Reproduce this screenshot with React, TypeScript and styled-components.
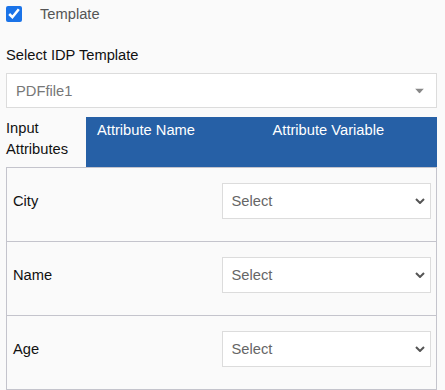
import styled, { createGlobalStyle } from 'styled-components';

const GlobalStyle = createGlobalStyle`
  html, body {
    margin: 0;
    padding: 0;
    background: #fafafa;
    font-family: "Liberation Sans", Arial, sans-serif;
    font-size: 14.7px;
  }
`;

const Page = styled.div`
  padding: 6px 8px 0 6px;
  color: #111;
`;

const CheckRow = styled.label`
  display: flex;
  align-items: center;
  height: 16px;
  gap: 18px;
  color: #555;
`;

const Checkbox = styled.input`
  width: 16px;
  height: 16px;
  margin: 0;
  accent-color: #1a73e8;
`;

const FieldLabel = styled.div`
  margin-top: 24px;
  line-height: 18px;
`;

const SelectWrap = styled.div<{ $height: number }>`
  position: relative;
  height: ${({ $height }) => $height}px;
`;

const NativeSelect = styled.select<{ $muted?: boolean }>`
  appearance: none;
  width: 100%;
  height: 100%;
  box-sizing: border-box;
  border: 1px solid #dcdcdc;
  background: #fff;
  font-family: inherit;
  font-size: 14.7px;
  color: ${({ $muted }) => ($muted ? '#777' : '#666')};
  padding: 0 30px 0 9px;
  outline: none;
`;

const Caret = styled.svg`
  position: absolute;
  right: 13px;
  top: 50%;
  transform: translateY(-50%);
  pointer-events: none;
`;

const TemplateSelectArea = styled.div`
  margin-top: 9px;
`;

const Header = styled.div`
  display: flex;
  margin-top: 9px;
  height: 50px;
`;

const HeaderLabel = styled.div`
  width: 80px;
  padding-top: 1px;
  line-height: 21px;
  color: #111;
`;

const HeaderBar = styled.div`
  flex: 1;
  display: grid;
  grid-template-columns: 1fr 1fr;
  background: #2660a6;
  color: #fff;
`;

const HeaderCell = styled.div`
  padding: 3px 0 0 11px;
  line-height: 21px;
`;

const Table = styled.div`
  border: 1px solid #c4c4cc;
  border-bottom: none;
`;

const Row = styled.div`
  display: grid;
  grid-template-columns: 1fr 1fr;
  border-bottom: 1px solid #c4c4cc;
  padding-top: 15px;
  box-sizing: border-box;
  height: 74px;
`;

const RowLabel = styled.div`
  padding-left: 6px;
  line-height: 36px;
  color: #111;
`;

const RowSelectCell = styled.div`
  padding-right: 5px;
`;

const TriangleCaret = () => (
  <Caret width="9" height="5" viewBox="0 0 9 5">
    <path d="M0 0 H9 L4.5 5 Z" fill="#888" />
  </Caret>
);

const ChevronCaret = () => (
  <Caret width="10" height="6" viewBox="0 0 10 6" style={{ right: 6 }}>
    <path d="M1 1 L5 5 L9 1" fill="none" stroke="#555" strokeWidth="2" />
  </Caret>
);

const attributes = ['City', 'Name', 'Age'];

const App = () => (
  <>
    <GlobalStyle />
    <Page>
      <CheckRow>
        <Checkbox type="checkbox" defaultChecked />
        Template
      </CheckRow>
      <FieldLabel>Select IDP Template</FieldLabel>
      <TemplateSelectArea>
        <SelectWrap $height={35}>
          <NativeSelect $muted defaultValue="PDFfile1">
            <option>PDFfile1</option>
          </NativeSelect>
          <TriangleCaret />
        </SelectWrap>
      </TemplateSelectArea>
      <Header>
        <HeaderLabel>
          Input
          <br />
          Attributes
        </HeaderLabel>
        <HeaderBar>
          <HeaderCell>Attribute Name</HeaderCell>
          <HeaderCell>Attribute Variable</HeaderCell>
        </HeaderBar>
      </Header>
      <Table>
        {attributes.map((name) => (
          <Row key={name}>
            <RowLabel>{name}</RowLabel>
            <RowSelectCell>
              <SelectWrap $height={36}>
                <NativeSelect defaultValue="Select">
                  <option>Select</option>
                </NativeSelect>
                <ChevronCaret />
              </SelectWrap>
            </RowSelectCell>
          </Row>
        ))}
      </Table>
    </Page>
  </>
);

export default App;
